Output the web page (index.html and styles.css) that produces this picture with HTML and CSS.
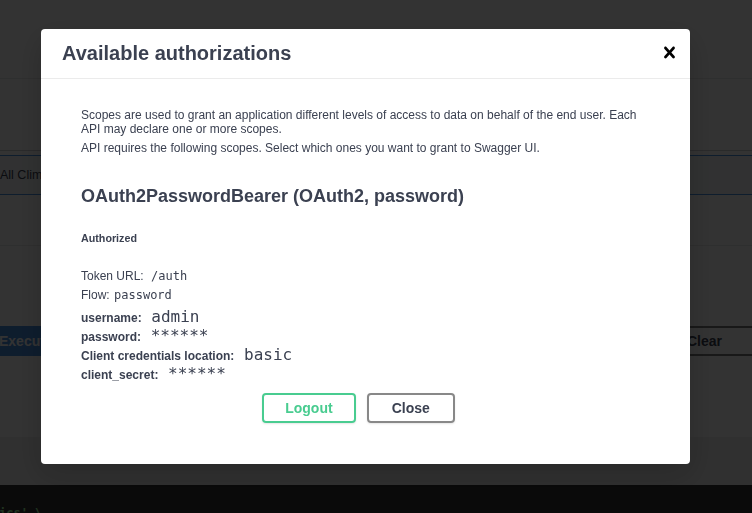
FILE: index.html
```html
<!DOCTYPE html>
<html lang="en">
<head>
<meta charset="utf-8">
<title>Available authorizations</title>
<link rel="stylesheet" href="styles.css">
</head>
<body>
<div class="page">
  <div class="topbar"></div>
  <div class="section s-info"></div>
  <div class="spacer"></div>
  <div class="filter-row"><span class="filter-text">All Climate Data</span></div>
  <div class="section s-params"></div>
  <div class="section s-body"></div>
  <div class="btn-group">
    <div class="pbtn execute">Execute</div>
    <div class="pbtn clear">Clear</div>
  </div>
  <div class="section s-resp"></div>
  <div class="section s-curl"></div>
  <div class="curl"><span class="curl-text">ics' \</span></div>
</div>

<div class="backdrop"></div>

<div class="modal">
  <div class="modal-header">
    <h3 class="modal-title">Available authorizations</h3>
    <button class="close-modal" type="button" aria-label="Close">
      <svg viewBox="0 0 20 20" width="23" height="23" aria-hidden="true"><path d="M14.348 14.849c-.469.469-1.229.469-1.697 0L10 11.819l-2.651 3.029c-.469.469-1.229.469-1.697 0-.469-.469-.469-1.229 0-1.697l2.758-3.15-2.759-3.152c-.469-.469-.469-1.228 0-1.697.469-.469 1.228-.469 1.697 0L10 8.183l2.651-3.031c.469-.469 1.228-.469 1.697 0 .469.469.469 1.229 0 1.697l-2.758 3.152 2.758 3.15c.469.469.469 1.229 0 1.698z"/></svg>
    </button>
  </div>
  <div class="modal-content">
    <div class="auth-container">
      <div class="scope-def">
        <p>Scopes are used to grant an application different levels of access to data on behalf of the end user. Each API may declare one or more scopes.</p>
        <p>API requires the following scopes. Select which ones you want to grant to Swagger UI.</p>
      </div>
      <h4 class="auth-name">OAuth2PasswordBearer (OAuth2, password)</h4>
      <h6 class="auth-state">Authorized</h6>
      <p class="meta">Token URL: <code class="small url">/auth</code></p>
      <p class="meta">Flow: <code class="small">password</code></p>
      <div class="field"><label>username:</label><code class="val"> admin </code></div>
      <div class="field"><label>password:</label><code class="val"> ****** </code></div>
      <div class="field"><label>Client credentials location:</label><code class="val"> basic </code></div>
      <div class="field"><label>client_secret:</label><code class="val"> ****** </code></div>
      <div class="auth-btn-wrapper">
        <button class="btn btn-logout" type="button">Logout</button>
        <button class="btn btn-close" type="button">Close</button>
      </div>
    </div>
  </div>
</div>
</body>
</html>
```

FILE: styles.css
```css
html, body {
  margin: 0;
  padding: 0;
  background: #ffffff;
  font-family: "Liberation Sans", Arial, sans-serif;
  color: #3b4151;
  overflow: hidden;
}

/* ---------- underlying page ---------- */
.page {
  width: 752px;
  height: 513px;
  display: flex;
  flex-direction: column;
  background: #ffffff;
}
.topbar {
  height: 78px;
  flex: none;
  border-bottom: 1px solid rgba(59, 65, 81, 0.12);
}
.section {
  flex: none;
  border-bottom: 1px solid rgba(59, 65, 81, 0.12);
}
.s-info { height: 71px; border-bottom-color: rgba(59, 65, 81, 0.25); }
.spacer { height: 4px; flex: none; }
.filter-row {
  flex: none;
  height: 38px;
  border-top: 1px solid #4990e2;
  border-bottom: 1px solid #4990e2;
  background: #f4f6f9;
  display: flex;
  align-items: center;
}
.filter-text {
  font-size: 12.5px;
  color: #3b4151;
  white-space: nowrap;
}
.s-params { height: 50px; }
.s-body { height: 80px; border-bottom: none; }
.btn-group {
  flex: none;
  display: flex;
  height: 30px;
}
.pbtn {
  font-size: 14px;
  font-weight: 700;
  display: flex;
  align-items: center;
  white-space: nowrap;
  box-sizing: border-box;
}
.execute {
  width: 370px;
  background: #4990e2;
  color: #ffffff;
  margin-left: -1px;
}
.clear {
  flex: 1;
  border: 2px solid #7a7a7a;
  border-right: none;
  color: #3b4151;
  padding-left: 316px;
}
.s-resp { height: 81px; border-bottom: none; }
.s-curl { height: 48px; background: #f0f0f0; border-bottom: none; }
.curl {
  flex: 1;
  background: #333333;
  padding-top: 18px;
}
.curl-text {
  font-family: "DejaVu Sans Mono", monospace;
  font-size: 12px;
  font-weight: 600;
  color: #a2fca2;
  white-space: pre;
  margin-left: -1px;
}

/* ---------- overlay ---------- */
.backdrop {
  position: fixed;
  inset: 0;
  background: rgba(0, 0, 0, 0.8);
}

.modal {
  position: fixed;
  left: 41px;
  top: 29px;
  width: 649px;
  background: #ffffff;
  border-radius: 4px;
  box-shadow: 0 10px 30px 0 rgba(0, 0, 0, 0.2);
}
.modal-header {
  height: 49px;
  box-sizing: content-box;
  border-bottom: 1px solid #ebebeb;
  display: flex;
  align-items: center;
  padding: 0 9px 0 21px;
}
.modal-title {
  flex: 1;
  margin: 0;
  font-size: 20px;
  font-weight: 700;
  color: #3b4151;
}
.close-modal {
  border: none;
  background: none;
  padding: 0;
  margin: 0 0 2px 0;
  width: 23px;
  height: 23px;
  display: flex;
  cursor: pointer;
}
.close-modal svg { fill: #000000; display: block; }

.modal-content {
  padding: 29px 40px 41px 40px;
}
.auth-container p {
  margin: 0 0 5px;
  font-size: 12px;
  color: #3b4151;
}
.auth-name {
  margin: 31px 0 0;
  font-size: 18px;
  font-weight: 700;
  color: #3b4151;
}
.auth-state {
  margin: 25px 0 25px;
  font-size: 10.72px;
  font-weight: 700;
  color: #3b4151;
}
.small {
  font-family: "DejaVu Sans Mono", monospace;
  font-size: 12px;
  color: #3b4151;
  margin-left: 1px;
}
.small.url { margin-left: 4px; }
.field {
  display: flex;
  align-items: baseline;
  height: 19px;
  white-space: pre;
}
.field label {
  font-size: 12px;
  font-weight: 700;
  color: #3b4151;
}
.val {
  font-family: "DejaVu Sans Mono", monospace;
  font-size: 16px;
  color: #3b4151;
}
.auth-btn-wrapper {
  display: flex;
  justify-content: center;
  gap: 11px;
  padding: 10px 14px 0 0;
}
.btn {
  font-family: "Liberation Sans", Arial, sans-serif;
  font-size: 14px;
  font-weight: 700;
  padding: 5px 23px;
  background: transparent;
  border: 2px solid #888888;
  border-radius: 4px;
  box-shadow: 0 1px 2px rgba(0, 0, 0, 0.1);
  color: #3b4151;
  line-height: normal;
}
.btn-logout {
  padding: 5px 21px;
  border-color: #49cc90;
  color: #49cc90;
}
```
